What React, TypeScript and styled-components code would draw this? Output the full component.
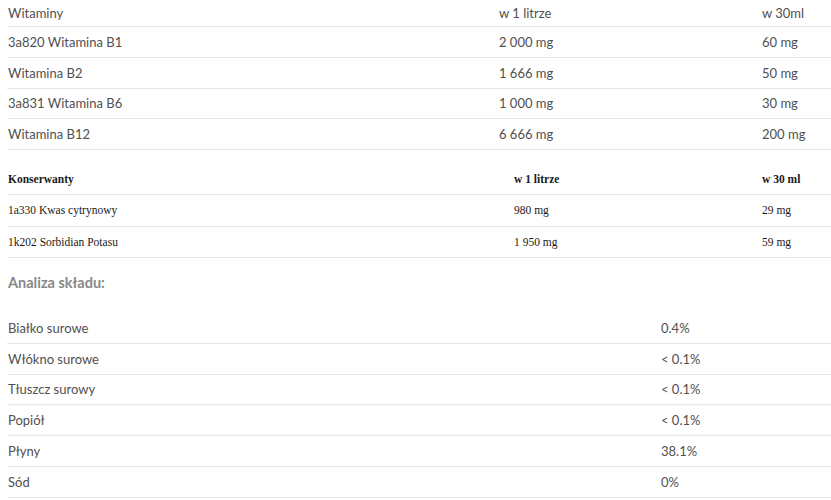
import React from "react";
import styled, { createGlobalStyle } from "styled-components";

const GlobalStyle = createGlobalStyle`
  html, body { margin: 0; padding: 0; background: #ffffff; }
  body { overflow: hidden; }
`;

const Page = styled.div`
  padding-left: 7px;
  width: 824px;
  overflow: hidden;
`;

const Table = styled.div<{ $serif?: boolean; $mt?: number }>`
  display: flex;
  flex-direction: column;
  margin-top: ${(p) => p.$mt ?? 0}px;
  font-family: ${(p) =>
    p.$serif ? '"Liberation Serif", "Times New Roman", serif' : 'Lato, "Open Sans", sans-serif'};
  color: ${(p) => (p.$serif ? "#1a1a1a" : "#505050")};
`;

const Row = styled.div<{ $cols: string; $h: number; $bold?: boolean; $size: number }>`
  display: grid;
  grid-template-columns: ${(p) => p.$cols};
  align-items: center;
  height: ${(p) => p.$h}px;
  border-bottom: 1px solid #e6e6e6;
  font-size: ${(p) => p.$size}px;
  font-weight: ${(p) => (p.$bold ? 700 : 400)};
`;

const Cell = styled.div`
  padding-left: 1px;
  white-space: nowrap;
`;

const Title = styled.div`
  margin-top: 13px;
  height: 24px;
  line-height: 24px;
  padding-left: 1px;
  font-family: Lato, "Open Sans", sans-serif;
  font-size: 14.5px;
  font-weight: 700;
  color: #888888;
`;

const vitaminCols = "491px 263px 1fr";
const preservCols = "506px 248px 1fr";
const analysisCols = "653px 1fr";

const vitamins = [
  ["3a820 Witamina B1", "2 000 mg", "60 mg"],
  ["Witamina B2", "1 666 mg", "50 mg"],
  ["3a831 Witamina B6", "1 000 mg", "30 mg"],
  ["Witamina B12", "6 666 mg", "200 mg"],
];

const preservatives = [
  ["1a330 Kwas cytrynowy", "980 mg", "29 mg"],
  ["1k202 Sorbidian Potasu", "1 950 mg", "59 mg"],
];

const analysis = [
  ["Białko surowe", "0.4%"],
  ["Włókno surowe", "< 0.1%"],
  ["Tłuszcz surowy", "< 0.1%"],
  ["Popiół", "< 0.1%"],
  ["Płyny", "38.1%"],
  ["Sód", "0%"],
];

export default function App() {
  return (
    <>
      <GlobalStyle />
      <Page>
        <Table>
          <Row $cols={vitaminCols} $h={26} $size={13}>
            <Cell>Witaminy</Cell>
            <Cell>w 1 litrze</Cell>
            <Cell>w 30ml</Cell>
          </Row>
          {vitamins.map((r) => (
            <Row key={r[0]} $cols={vitaminCols} $h={29.75} $size={13}>
              {r.map((c, i) => (
                <Cell key={i}>{c}</Cell>
              ))}
            </Row>
          ))}
        </Table>

        <Table $serif $mt={13}>
          <Row $cols={preservCols} $h={31} $size={11.5} $bold>
            <Cell>Konserwanty</Cell>
            <Cell>w 1 litrze</Cell>
            <Cell>w 30 ml</Cell>
          </Row>
          {preservatives.map((r) => (
            <Row key={r[0]} $cols={preservCols} $h={30.5} $size={11.5}>
              {r.map((c, i) => (
                <Cell key={i}>{c}</Cell>
              ))}
            </Row>
          ))}
        </Table>

        <Title>Analiza składu:</Title>

        <Table $mt={18}>
          {analysis.map((r) => (
            <Row key={r[0]} $cols={analysisCols} $h={29.75} $size={13}>
              <Cell>{r[0]}</Cell>
              <Cell>{r[1]}</Cell>
            </Row>
          ))}
        </Table>
      </Page>
    </>
  );
}
